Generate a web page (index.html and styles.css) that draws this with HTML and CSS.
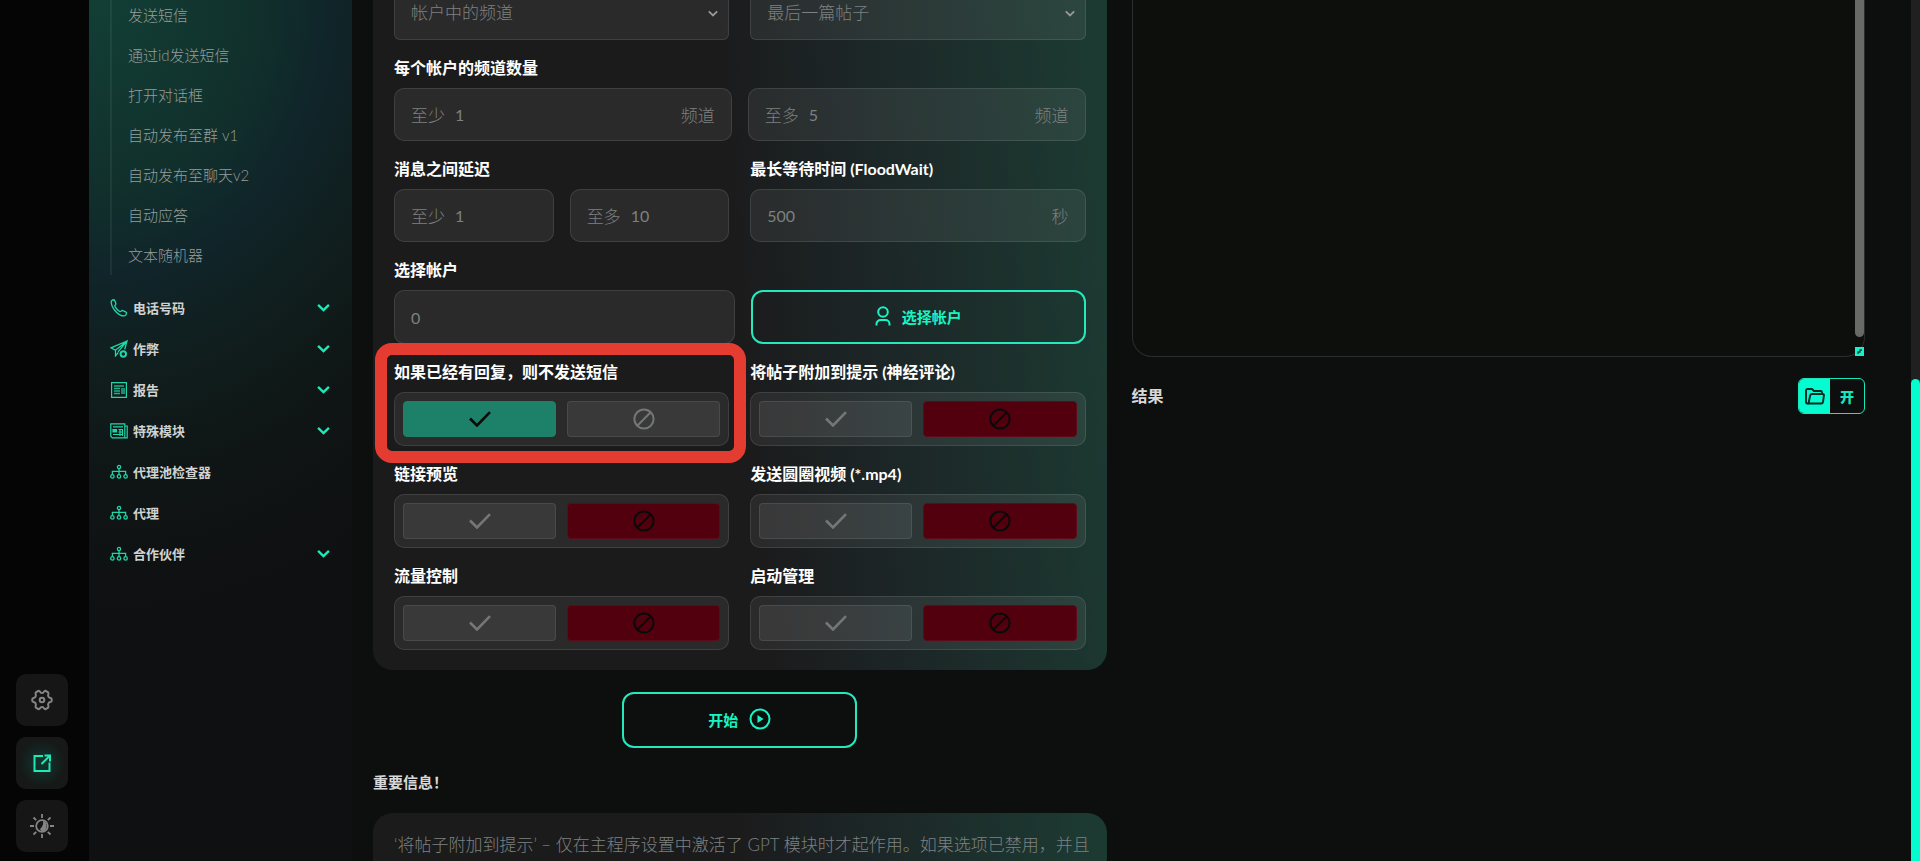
FILE: index.html
```html
<!DOCTYPE html>
<html lang="zh-CN">
<head>
<meta charset="utf-8">
<title>自动发布</title>
<link rel="stylesheet" href="styles.css">
</head>
<body>
<svg class="defs" aria-hidden="true">
  <symbol id="chev" viewBox="0 0 12 8"><path d="M1 1.5l5 4.8 5-4.8" fill="none" stroke="currentColor" stroke-width="2.2"/></symbol>
  <symbol id="check" viewBox="0 0 22 16"><path d="M1 7.5l7 7L21 1.2" fill="none" stroke="currentColor" stroke-width="2.6"/></symbol>
  <symbol id="ban" viewBox="0 0 22 22"><g fill="none" stroke="currentColor" stroke-width="2"><circle cx="11" cy="11" r="9.6"/><path d="M4.3 17.7L17.7 4.3"/></g></symbol>
  <symbol id="tree" viewBox="0 0 18 18"><g fill="none" stroke="currentColor" stroke-width="1.3"><circle cx="9" cy="4" r="1.6"/><circle cx="2.4" cy="13.4" r="1.7"/><circle cx="9" cy="13.4" r="1.7"/><circle cx="15.6" cy="13.4" r="1.7"/><path d="M9 5.7v6M2.4 11.5V8.3h13.2v3.2"/></g></symbol>
</svg>
<div class="app">
  <div class="rail">
    <button class="rail-btn" aria-label="设置"><svg width="22" height="22" viewBox="0 0 22 22" fill="none" stroke="currentColor" stroke-width="2"><path d="M7.5 1.8q1.2 0 1.6 1 .4 1.2 1.9 1.2t1.9-1.2q.4-1 1.6-1l2.6 1.5q.7.9.2 2-.6 1.3.3 2.6.7 1 1.9 1 1.2.2 1.2 1.4v1.4q0 1.2-1.2 1.4-1.2 0-1.9 1-.9 1.3-.3 2.6.5 1.1-.2 2l-2.6 1.5q-1.2 0-1.6-1Q12.500 18 11 18t-1.900 1.200q-.4 1-1.600 1l-2.600-1.500q-.7-.9-.2-2 .6-1.300-.3-2.600-.7-1-1.900-1-1.200-.2-1.200-1.400v-1.400q0-1.200 1.200-1.400 1.200 0 1.900-1 .9-1.300.3-2.600-.5-1.100.2-2z"/><circle cx="11" cy="11" r="2.300"/></svg></button>
    <button class="rail-btn on" aria-label="打开"><svg width="20" height="20" viewBox="0 0 20 20" fill="none" stroke="currentColor" stroke-width="2"><path d="M11 3H2.500v15H17.500V9.500M9.500 11L17.300 3.200M12.500 2.500H18V8.500"/></svg></button>
    <button class="rail-btn" aria-label="主题"><svg width="24" height="24" viewBox="0 0 24 24" fill="none" stroke="currentColor" stroke-width="1.800"><circle cx="12" cy="12" r="5.800"/><path d="M13 6.500a6 6 0 0 1 0 11q-3-.8-3-2.500 4-3 3-8.500z" fill="currentColor" stroke="none"/><path d="M12 0v4M12 20v4M0 12h4M20 12h4M3.500 3.500l2.700 2.700M17.800 17.800l2.700 2.700M3.500 20.500l2.700-2.700M17.800 6.200l2.700-2.700"/></svg></button>
  </div>

  <nav class="sidebar">
    <ul class="sub">
      <li><a href="#">发送短信</a></li>
      <li><a href="#">通过id发送短信</a></li>
      <li><a href="#">打开对话框</a></li>
      <li><a href="#">自动发布至群 v1</a></li>
      <li><a href="#">自动发布至聊天v2</a></li>
      <li><a href="#">自动应答</a></li>
      <li><a href="#">文本随机器</a></li>
    </ul>
    <ul class="menu">
      <li><a href="#"><svg class="ico" viewBox="0 0 18 18" fill="none" stroke="currentColor" stroke-width="1.400"><path d="M1.200 3.200C1 1.800 2.500.8 3.500.8q.9 0 1.300 1l1 2.500q.3 1-.500 1.700-.8.800-.3 1.600 1.700 3 4.700 4.900.8.400 1.500-.4.700-.9 1.600-.500l2.800 1.300q1.300.600.900 1.700-.500 1.700-2.300 2.300C9 17.200 1.800 10 1.200 3.200z"/></svg><span>电话号码</span><svg class="chev"><use href="#chev"/></svg></a></li>
      <li><a href="#"><svg class="ico" viewBox="0 0 18 18" fill="none" stroke="currentColor" stroke-width="1.300"><path d="M17 1L1 7.800l4.500 2.500L17 1l-2.300 8.500M5.500 10.300v5.500l2.800-3.300M17 1L8 11.800"/><circle cx="13.300" cy="14" r="2.700" stroke-width="2"/></svg><span>作弊</span><svg class="chev"><use href="#chev"/></svg></a></li>
      <li><a href="#"><svg class="ico" viewBox="0 0 18 18" fill="none" stroke="currentColor" stroke-width="1.200"><path d="M1.600 1.600h14.800v14.800H1.600z"/><path d="M4 5h10M4 7.500h6M4 10h6M4 12.500h6M12 7v6M14 7v6" stroke-width="1.500" opacity=".8"/></svg><span>报告</span><svg class="chev"><use href="#chev"/></svg></a></li>
      <li><a href="#"><svg class="ico" viewBox="0 0 18 18" fill="none" stroke="currentColor" stroke-width="1.200"><path d="M.8 1.800h14v14H2.300L.8 14.500zM14.800 4h2.400v11.800h-2.400"/><path d="M3 4.800h10M8.500 7.500H13M8.500 10H13M3 12.500h10M10 7v7M12.500 7v7"/><path d="M3 7.500h3.500v2.500H3z" fill="currentColor"/></svg><span>特殊模块</span><svg class="chev"><use href="#chev"/></svg></a></li>
      <li><a href="#"><svg class="ico"><use href="#tree"/></svg><span>代理池检查器</span></a></li>
      <li><a href="#"><svg class="ico"><use href="#tree"/></svg><span>代理</span></a></li>
      <li><a href="#"><svg class="ico"><use href="#tree"/></svg><span>合作伙伴</span><svg class="chev"><use href="#chev"/></svg></a></li>
    </ul>
  </nav>

  <main class="main">
    <section class="col">
      <form class="card form">
        <div class="row">
          <div class="select"><select aria-label="来源"><option>帐户中的频道</option></select><svg class="arrow"><use href="#chev"/></svg></div>
          <div class="select"><select aria-label="帖子"><option>最后一篇帖子</option></select><svg class="arrow"><use href="#chev"/></svg></div>
        </div>

        <div class="label">每个帐户的频道数量</div>
        <div class="row tight">
          <label class="box"><span>至少</span><input value="1"><span>频道</span></label>
          <label class="box"><span>至多</span><input value="5"><span>频道</span></label>
        </div>

        <div class="row">
          <div>
            <div class="label">消息之间延迟</div>
            <div class="row tight">
              <label class="box"><span>至少</span><input value="1"></label>
              <label class="box"><span>至多</span><input value="10"></label>
            </div>
          </div>
          <div>
            <label class="label" for="flood">最长等待时间 (FloodWait)</label>
            <div class="box"><input id="flood" value="500"><span>秒</span></div>
          </div>
        </div>

        <label class="label" for="acc">选择帐户</label>
        <div class="row accounts">
          <div class="box"><input id="acc" value="0"></div>
          <button type="button" class="outline"><svg width="16" height="20" viewBox="0 0 16 20" fill="none" stroke="currentColor" stroke-width="2"><circle cx="8" cy="6" r="4.800"/><path d="M1.500 19.500v-1.500a4 4 0 0 1 4-4h5a4 4 0 0 1 4 4v1.500"/></svg>选择帐户</button>
        </div>

        <div class="row">
          <div class="field marked">
            <div class="label">如果已经有回复，则不发送短信</div>
            <div class="toggle">
              <label class="opt yes"><input type="radio" name="t1" aria-label="是" checked><svg class="check"><use href="#check"/></svg></label>
              <label class="opt no"><input type="radio" name="t1" aria-label="否"><svg class="ban"><use href="#ban"/></svg></label>
            </div>
          </div>
          <div class="field">
            <div class="label">将帖子附加到提示 (神经评论)</div>
            <div class="toggle">
              <label class="opt yes"><input type="radio" name="t2" aria-label="是"><svg class="check"><use href="#check"/></svg></label>
              <label class="opt no"><input type="radio" name="t2" aria-label="否" checked><svg class="ban"><use href="#ban"/></svg></label>
            </div>
          </div>
        </div>
        <div class="row">
          <div class="field">
            <div class="label">链接预览</div>
            <div class="toggle">
              <label class="opt yes"><input type="radio" name="t3" aria-label="是"><svg class="check"><use href="#check"/></svg></label>
              <label class="opt no"><input type="radio" name="t3" aria-label="否" checked><svg class="ban"><use href="#ban"/></svg></label>
            </div>
          </div>
          <div class="field">
            <div class="label">发送圆圈视频 (*.mp4)</div>
            <div class="toggle">
              <label class="opt yes"><input type="radio" name="t4" aria-label="是"><svg class="check"><use href="#check"/></svg></label>
              <label class="opt no"><input type="radio" name="t4" aria-label="否" checked><svg class="ban"><use href="#ban"/></svg></label>
            </div>
          </div>
        </div>
        <div class="row">
          <div class="field">
            <div class="label">流量控制</div>
            <div class="toggle">
              <label class="opt yes"><input type="radio" name="t5" aria-label="是"><svg class="check"><use href="#check"/></svg></label>
              <label class="opt no"><input type="radio" name="t5" aria-label="否" checked><svg class="ban"><use href="#ban"/></svg></label>
            </div>
          </div>
          <div class="field">
            <div class="label">启动管理</div>
            <div class="toggle">
              <label class="opt yes"><input type="radio" name="t6" aria-label="是"><svg class="check"><use href="#check"/></svg></label>
              <label class="opt no"><input type="radio" name="t6" aria-label="否" checked><svg class="ban"><use href="#ban"/></svg></label>
            </div>
          </div>
        </div>
      </form>
      <button class="outline start">开始<svg width="22" height="22" viewBox="0 0 22 22"><circle cx="11" cy="11" r="9.500" fill="none" stroke="currentColor" stroke-width="2"/><path d="M8.500 7l6 4-6 4z" fill="currentColor"/></svg></button>
      <h2 class="title">重要信息！</h2>
      <div class="card info">‘将帖子附加到提示’ – 仅在主程序设置中激活了 GPT 模块时才起作用。如果选项已禁用，并且</div>
    </section>

    <section class="col">
      <div class="log">
        <textarea aria-label="日志"></textarea>
        <div class="log-thumb"></div>
        <svg class="grip" viewBox="0 0 9 9"><path d="M3 7V5h2V3h2" fill="none" stroke="#0b3b30" stroke-width="1.300"/></svg>
      </div>
      <div class="result">
        <h2 class="title">结果</h2>
        <button class="open"><span class="folder"><svg width="20" height="17" viewBox="0 0 20 17" fill="none" stroke="currentColor" stroke-width="1.900" stroke-linejoin="round"><path d="M3.500 15.500H2.300Q1 15.500 1 14V2.500Q1 1 2.500 1H7l2 2h6.500q1.500 0 1.500 1.500V6"/><path d="M5.200 7.200Q5.500 6 7 6h10.500q1.700 0 1.400 1.500l-.9 6.500q-.3 1.500-1.800 1.500H3.500z"/></svg></span><span class="open-text">开</span></button>
      </div>
    </section>
  </main>
  <div class="page-scroll"><div class="page-thumb"></div></div>
</div>
</body>
</html>
```

FILE: styles.css
```css
* { box-sizing: border-box; }
body {
  margin: 0;
  background: #0d0e0e;
  color: #fff;
  font-family: Lato, "Noto Sans CJK SC", sans-serif;
  font-size: 16px;
}
ul { list-style: none; margin: 0; padding: 0; }
a { color: inherit; text-decoration: none; }
button, input, select, textarea { font: inherit; color: inherit; }
button { cursor: pointer; padding: 0; border: 0; background: none; }
.defs { display: none; }

.app {
  display: grid;
  grid-template-columns: 89px 263px minmax(0, 1fr) 9px;
  height: 100vh;
  overflow: hidden;
}

.rail {
  background: #050505;
  display: flex;
  flex-direction: column;
  justify-content: flex-end;
  gap: 11px;
  padding: 0 0 9px 16px;
}
.rail-btn {
  width: 52px;
  height: 52px;
  border-radius: 10px;
  background: #161616;
  color: #858585;
  display: grid;
  place-items: center;
}
.rail-btn.on {
  color: #1fe8ba;
  background: radial-gradient(circle, #10382f, #161918 62%);
}

.sidebar {
  background: radial-gradient(ellipse 520px 620px at 10px 0, #123f35, #11302c 30%, #10252a 44%, #101d1c 62%, #0f1515 78%, #0f1012);
  overflow: hidden;
}
.sub {
  margin: -5px 0 12px 21px;
  padding-left: 16px;
  border-left: 2px solid rgba(255, 255, 255, .06);
  color: #949d9b;
  font-size: 15px;
  font-weight: 300;
  line-height: 40px;
}
.menu {
  padding: 0 22px 0 21px;
  color: #d0d3d2;
  font-size: 13px;
  font-weight: 700;
}
.menu a { display: flex; align-items: center; gap: 5px; height: 41px; }
.ico { width: 18px; height: 18px; color: #20d6a9; }
.chev { width: 13px; height: 9px; margin-left: auto; color: #20e8ba; }

.main {
  display: grid;
  grid-template-columns: 1fr 1fr;
  gap: 25px;
  padding: 0 46px 0 21px;
  overflow: hidden;
}
.col { min-width: 0; display: flex; flex-direction: column; }
.card {
  background: linear-gradient(85deg, #1b1b1c 50%, #1c2425 64%, #1c3932 96%);
  border-radius: 20px;
  padding: 20px 21px;
}
.form { margin-top: -34px; }
.row { display: grid; grid-template-columns: minmax(0, 1fr) minmax(0, 1fr); gap: 21px; }
.row.tight { gap: 16px; }
.row.accounts { grid-template-columns: minmax(0, 341fr) minmax(0, 334fr); gap: 16px; }
.label { display: block; height: 48px; line-height: 55px; font-weight: 700; white-space: nowrap; }

.box, .select, .toggle {
  background: rgba(255, 255, 255, .065);
  border: 1px solid rgba(255, 255, 255, .1);
  border-radius: 10px;
}
.box {
  display: flex;
  align-items: center;
  gap: 10px;
  height: 53px;
  padding: 0 16px;
  color: #7d8180;
  font-size: 17px;
  font-weight: 300;
}
.box span { white-space: nowrap; }
.box input {
  flex: 1;
  min-width: 0;
  padding: 0;
  border: 0;
  background: none;
  font-size: 16px;
  font-weight: 400;
  outline: 0;
}
.accounts .box { height: 54px; }
.select { display: grid; align-items: center; height: 54px; border-radius: 6px; color: #7d8180; }
.select select {
  grid-area: 1 / 1;
  height: 50px;
  margin-bottom: 2px;
  padding: 0 16px;
  border: 0;
  background: none;
  appearance: none;
  font-size: 17px;
  font-weight: 300;
}
.arrow { grid-area: 1 / 1; justify-self: end; width: 10px; height: 7px; margin-right: 10px; color: #999; pointer-events: none; }

.outline {
  display: flex;
  align-items: center;
  justify-content: center;
  gap: 11px;
  height: 54px;
  padding-bottom: 2px;
  border: 2px solid #26e8bd;
  border-radius: 12px;
  color: #16f5c4;
  font-size: 15px;
  font-weight: 700;
}
.toggle {
  display: grid;
  grid-template-columns: 1fr 1fr;
  gap: 11px;
  height: 54px;
  padding: 8px;
}
.opt { display: grid; place-items: center; color: #747776; }
.opt input {
  grid-area: 1 / 1;
  width: 100%;
  height: 36px;
  margin: 0;
  appearance: none;
  border: 1px solid rgba(255, 255, 255, .09);
  border-radius: 4px;
  background: rgba(255, 255, 255, .07);
}
.opt svg { grid-area: 1 / 1; pointer-events: none; }
.opt .check { width: 22px; height: 16px; }
.opt .ban { width: 22px; height: 22px; }
.yes input:checked { background: #1d8069; border-color: #1d8069; }
.no input:checked { background: #52000e; border-color: #5f0a19; }
.opt input:checked + svg { color: #0a0a0a; }

.field { position: relative; }
.marked::after {
  content: "";
  position: absolute;
  inset: -1px -17px -17px -19px;
  border: 12px solid #e53c32;
  border-radius: 17px;
  pointer-events: none;
}

.start { align-self: center; width: 235px; height: 56px; margin-top: 22px; }
.title { margin: 0; color: #d8d8d8; font-size: 15px; font-weight: 700; line-height: 24px; }
.col > .title { margin: 22px 0 19px; }
.info { padding-right: 12px; color: #7d8180; font-size: 17px; font-weight: 300; line-height: 24px; }

.log {
  position: relative;
  height: 357px;
  border: 1px solid #2b2d2c;
  border-top: 0;
  border-radius: 0 0 20px 20px;
  background: #0d0f0d;
}
.log textarea {
  display: block;
  width: 100%;
  height: 100%;
  padding: 16px;
  border: 0;
  background: none;
  resize: none;
  outline: 0;
}
.log-thumb {
  position: absolute;
  top: 0;
  right: 0;
  width: 9px;
  height: 337px;
  background: #676a67;
  border-radius: 0 0 5px 5px;
}
.grip { position: absolute; right: 0; bottom: 0; width: 9px; height: 9px; background: #12f5ca; }
.result { display: flex; align-items: center; justify-content: space-between; margin-top: 21px; }
.result .title { font-size: 16px; }
.open {
  display: flex;
  width: 67px;
  height: 36px;
  overflow: hidden;
  border: 1px solid #16e8bd;
  border-radius: 6px;
  color: #16e8bd;
  font-size: 14px;
  font-weight: 900;
}
.folder { display: grid; place-items: center; width: 31px; height: 100%; background: #05fbd0; color: #062a22; }
.open-text { flex: 1; align-self: center; }

.page-scroll { background: #1f201f; display: flex; align-items: flex-end; }
.page-thumb { width: 9px; height: 56vh; background: #05fbd0; border-radius: 5px 5px 0 0; }
```
